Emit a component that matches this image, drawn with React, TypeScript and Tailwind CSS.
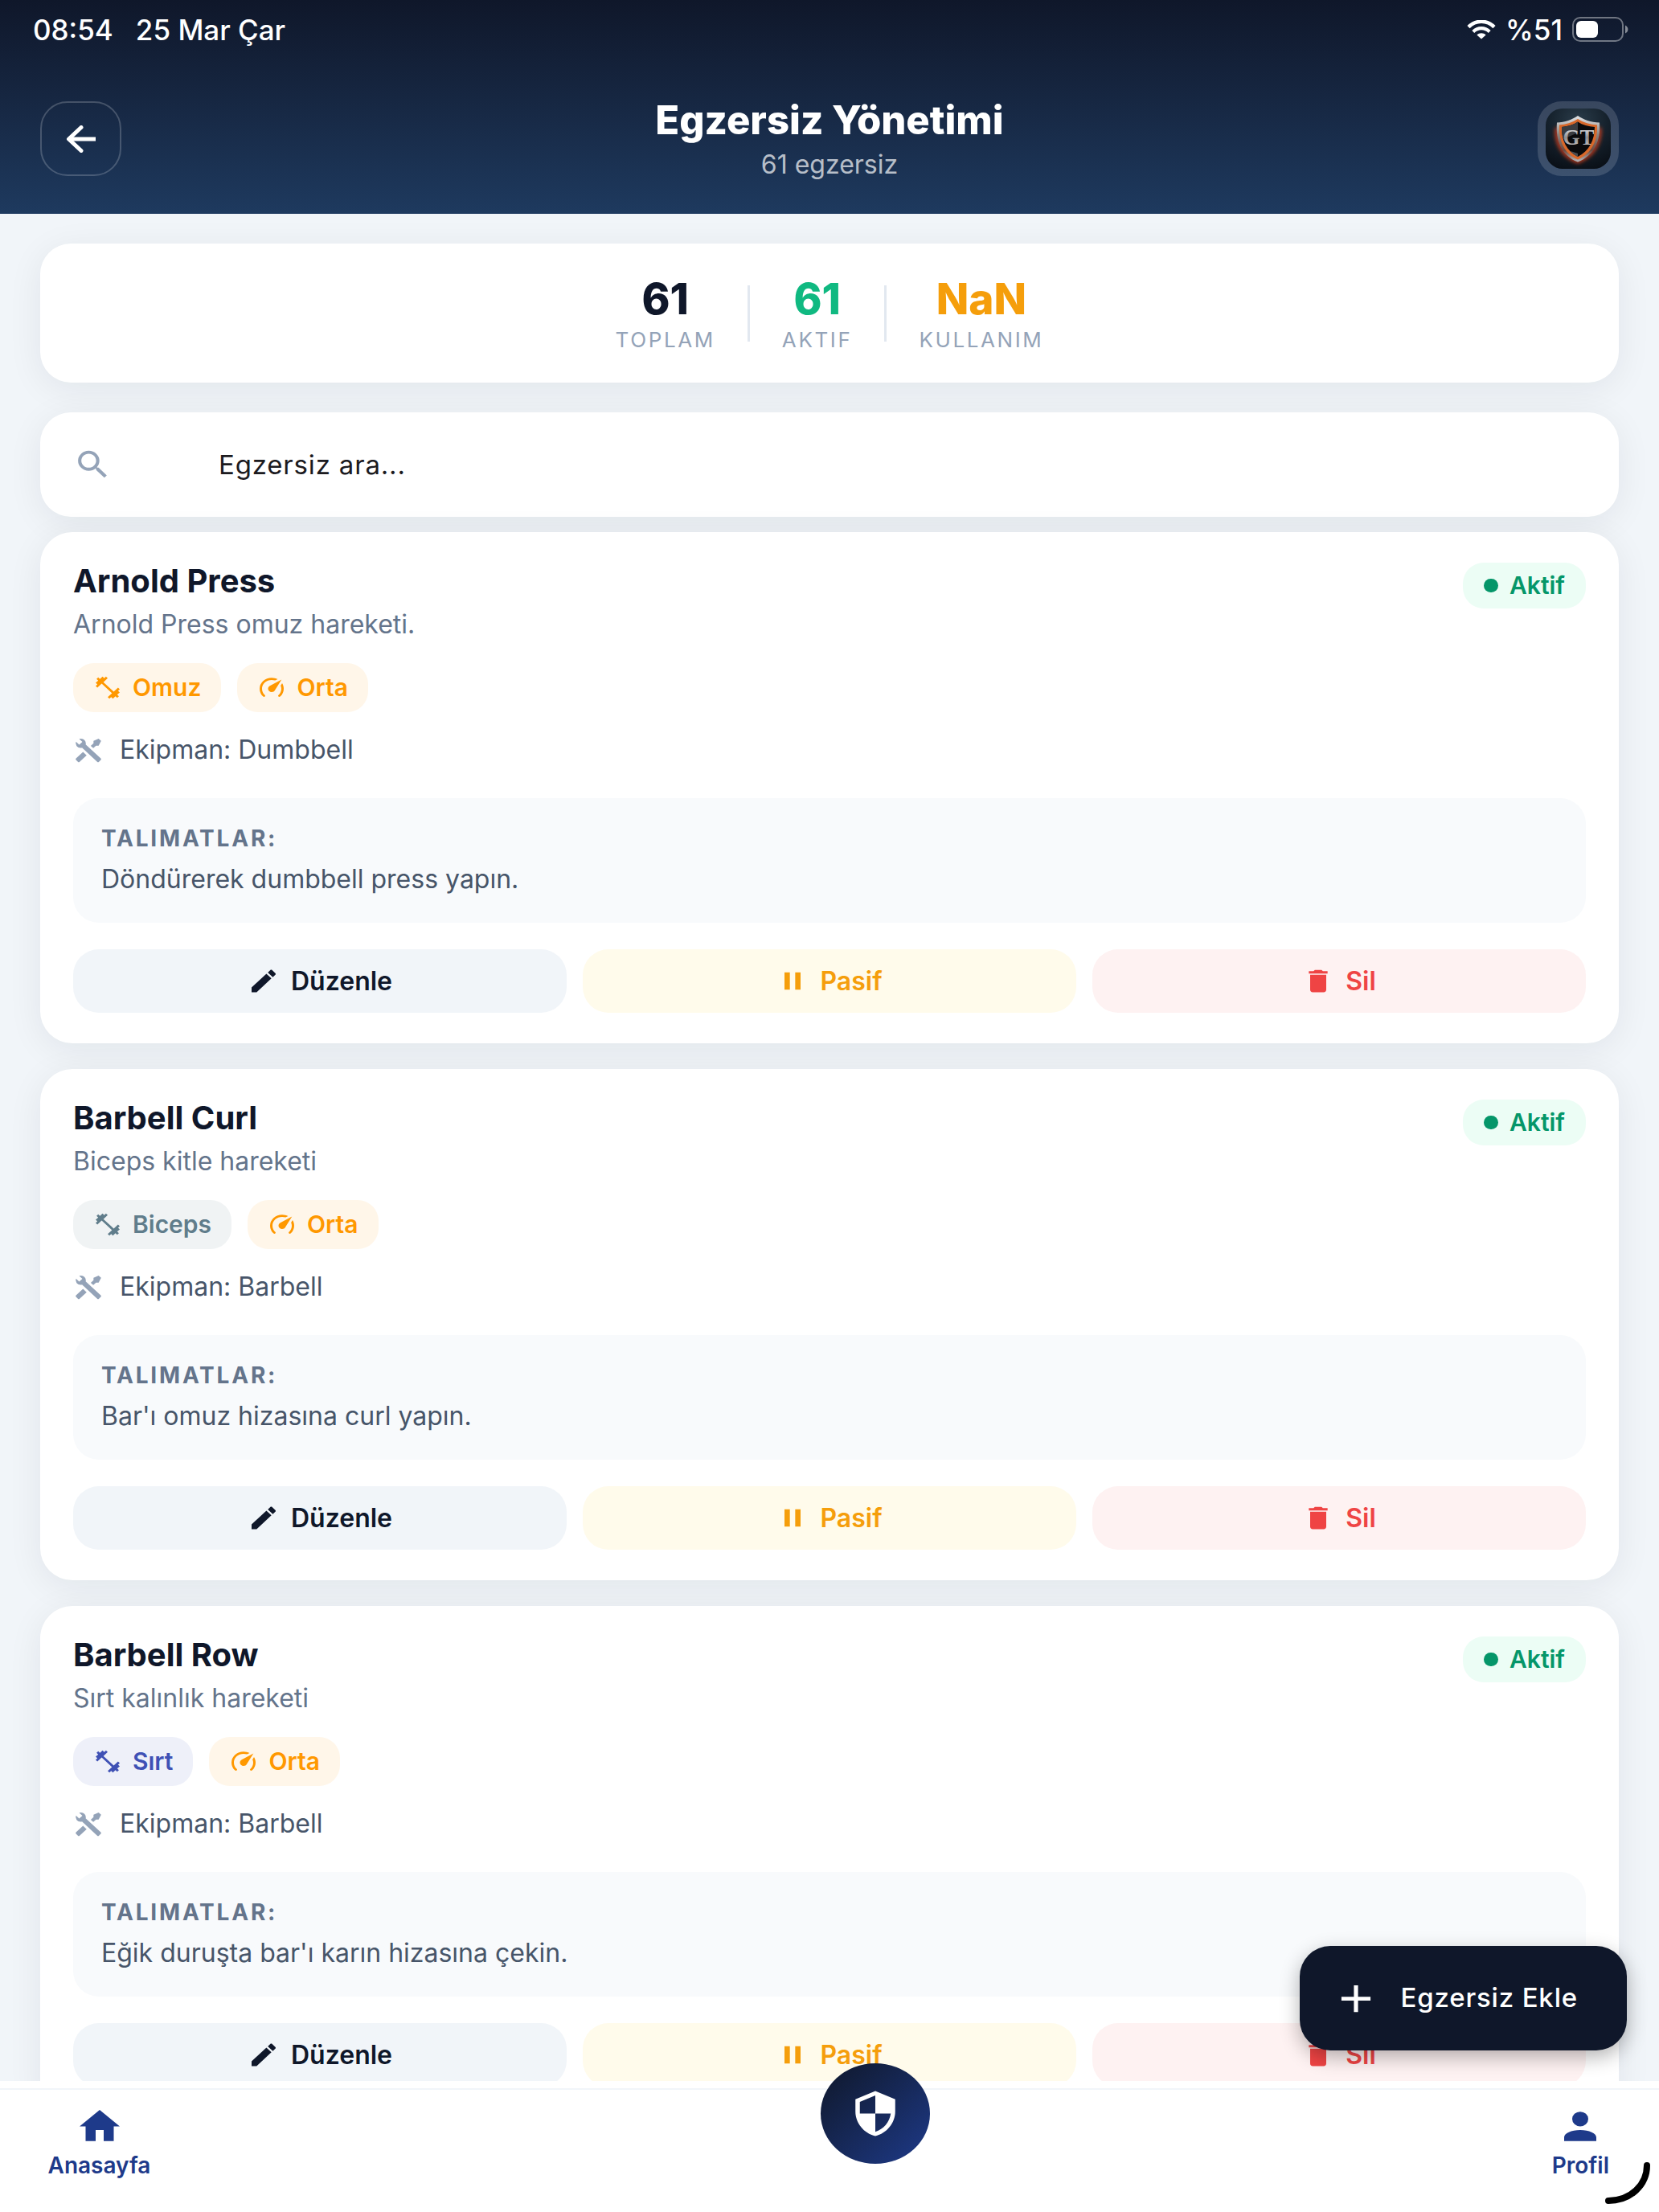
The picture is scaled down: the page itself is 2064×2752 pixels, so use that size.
import type { ReactNode } from "react";

const PATHS = {
  dumbbell:
    "M20.57,14.86L22,13.43L20.57,12L17,15.57L8.43,7L12,3.43L10.57,2L9.14,3.43L7.71,2L5.57,4.14L4.14,2.71L2.71,4.14L4.14,5.57L2,7.71L3.43,9.14L2,10.57L3.43,12L7,8.43L15.57,17L12,20.57L13.43,22L14.86,20.57L16.29,22L18.43,19.86L19.86,21.29L21.29,19.86L19.86,18.43L22,16.29L20.57,14.86Z",
  speedometer:
    "M12,16A3,3 0 0,1 9,13C9,11.88 9.61,10.9 10.5,10.39L20.21,4.77L14.68,14.35C14.18,15.33 13.17,16 12,16M12,3C13.81,3 15.5,3.5 16.97,4.32L14.87,5.53C14,5.19 13,5 12,5A8,8 0 0,0 4,13C4,15.21 4.89,17.21 6.34,18.65H6.35C6.74,19.04 6.74,19.67 6.35,20.06C5.96,20.45 5.32,20.45 4.93,20.07V20.07C3.12,18.26 2,15.76 2,13A10,10 0 0,1 12,3M22,13C22,15.76 20.88,18.26 19.07,20.07V20.07C18.68,20.45 18.05,20.45 17.66,20.06C17.27,19.67 17.27,19.04 17.66,18.65V18.65C19.11,17.2 20,15.21 20,13C20,12 19.81,11 19.46,10.1L20.67,8C21.5,9.5 22,11.18 22,13Z",
  tools:
    "M21.71 20.29L20.29 21.71A1 1 0 0 1 18.88 21.71L7 9.85A3.81 3.81 0 0 1 6 10A4 4 0 0 1 2.22 4.7L4.76 7.24L5.29 6.71L6.71 5.29L7.24 4.76L4.7 2.22A4 4 0 0 1 10 6A3.81 3.81 0 0 1 9.85 7L21.71 18.88A1 1 0 0 1 21.71 20.29M2.29 18.88A1 1 0 0 0 2.29 20.29L3.71 21.71A1 1 0 0 0 5.12 21.71L10.59 16.25L7.76 13.42M20 2L16 4V6L13.83 8.17L15.83 10.17L18 8H20L22 4Z",
  pencil:
    "M20.71,7.04C21.1,6.65 21.1,6 20.71,5.63L18.37,3.29C18,2.9 17.35,2.9 16.96,3.29L15.12,5.12L18.87,8.87M3,17.25V21H6.75L17.81,9.93L14.06,6.18L3,17.25Z",
  pause: "M14,19H18V5H14M6,19H10V5H6V19Z",
  trash:
    "M19,4H15.5L14.5,3H9.5L8.5,4H5V6H19M6,19A2,2 0 0,0 8,21H16A2,2 0 0,0 18,19V7H6V19Z",
  magnify:
    "M9.5,3A6.5,6.5 0 0,1 16,9.5C16,11.11 15.41,12.59 14.44,13.73L14.71,14H15.5L20.5,19L19,20.5L14,15.5V14.71L13.73,14.44C12.59,15.41 11.11,16 9.5,16A6.5,6.5 0 0,1 3,9.5A6.5,6.5 0 0,1 9.5,3M9.5,5C7,5 5,7 5,9.5C5,12 7,14 9.5,14C12,14 14,12 14,9.5C14,7 12,5 9.5,5Z",
  home: "M10,20V14H14V20H19V12H22L12,3L2,12H5V20H10Z",
  account:
    "M12,4A4,4 0 0,1 16,8A4,4 0 0,1 12,12A4,4 0 0,1 8,8A4,4 0 0,1 12,4M12,14C16.42,14 20,15.79 20,18V20H4V18C4,15.79 7.58,14 12,14Z",
  shield:
    "M12,12H19C18.47,16.11 15.72,19.78 12,20.92V12H5V6.3L12,3.19M12,1L3,5V11C3,16.55 6.84,21.73 12,23C17.16,21.73 21,16.55 21,11V5L12,1Z",
  plus: "M19,13H13V19H11V13H5V11H11V5H13V11H19V13Z",
};

function Icon({ name, className }: { name: keyof typeof PATHS; className: string }) {
  return (
    <svg
      viewBox="0 0 24 24"
      preserveAspectRatio="none"
      fill="currentColor"
      fillRule="evenodd"
      aria-hidden="true"
      className={`shrink-0 ${className}`}
    >
      <path d={PATHS[name]} />
    </svg>
  );
}

function StatusBar() {
  return (
    <div className="flex h-[74px] items-center justify-between pr-[38px] pl-[41px] text-[35px] leading-10 font-medium text-white">
      <div className="flex gap-7">
        <span>08:54</span>
        <span>25 Mar Çar</span>
      </div>
      <div className="flex items-center gap-3">
        <svg viewBox="0 0 36 24" className="h-6 w-9" fill="none" stroke="white" aria-hidden="true">
          <path d="M2 8.6C11 -0.6 25 -0.6 34 8.6" strokeWidth="4.4" />
          <path d="M7.8 14.4C13.6 8.8 22.4 8.8 28.2 14.4" strokeWidth="4.2" />
          <path d="M12.4 18.6C15.4 15.6 20.6 15.6 23.6 18.6L18 23.6Z" fill="white" stroke="none" />
        </svg>
        <span>%51</span>
        <svg viewBox="0 0 70 32" className="h-8 w-[70px]" fill="none" aria-hidden="true">
          <rect x="1" y="1" width="62" height="29" rx="9" stroke="white" strokeOpacity="0.4" strokeWidth="2" />
          <rect x="5" y="5" width="27" height="21" rx="6" fill="white" />
          <path d="M66 10.5C70.5 12.5 70.5 18.5 66 20.5Z" fill="white" fillOpacity="0.5" />
        </svg>
      </div>
    </div>
  );
}

function Logo() {
  return (
    <svg viewBox="0 0 81 75" className="h-[75px] w-[81px] rounded-[21px]" role="img" aria-label="GT">
      <defs>
        <radialGradient id="tile" cx="0.5" cy="0.2" r="0.9">
          <stop offset="0" stopColor="#2a3c4a" />
          <stop offset="0.5" stopColor="#15212c" />
          <stop offset="1" stopColor="#080d14" />
        </radialGradient>
        <linearGradient id="rim" x1="0" y1="0" x2="0" y2="1">
          <stop offset="0" stopColor="#e3e5e8" />
          <stop offset="0.4" stopColor="#8d8580" />
          <stop offset="0.75" stopColor="#6b4a40" />
          <stop offset="1" stopColor="#b9bcc0" />
        </linearGradient>
        <linearGradient id="steel" x1="0" y1="0" x2="0" y2="1">
          <stop offset="0" stopColor="#ffffff" />
          <stop offset="0.5" stopColor="#8e8e92" />
          <stop offset="1" stopColor="#d9d2cd" />
        </linearGradient>
        <filter id="glow" x="-30%" y="-30%" width="160%" height="160%">
          <feGaussianBlur stdDeviation="2.4" />
        </filter>
      </defs>
      <rect width="81" height="75" fill="url(#tile)" />
      <path
        d="M14 24C13 43 21 58 40 66C59 58 68 43 67 24"
        fill="none"
        stroke="#e2401a"
        strokeWidth="4"
        filter="url(#glow)"
      />
      <path
        d="M40 9C33 14 24 17 14 17.500C12 40 20 59 40 66.500C60 59 69 40 67 17.500C56 17 47 14 40 9Z"
        fill="url(#rim)"
      />
      <path
        d="M40 13C33 17.500 25 20 17 20.500C16 40 23 56 40 63.500C57 56 65 40 64 20.500C55 20 47 17.500 40 13Z"
        fill="#d9682a"
      />
      <path
        d="M40 16.500C34 20.500 27 22.500 20 23C19.500 39 26 53 40 60C54 53 61 39 61 23C53 22.500 46 20.500 40 16.500Z"
        fill="#0a0a0c"
      />
      <path d="M40 16.500C34 20.500 27 22.500 20 23C19.800 28 20.300 33 22 38L40 30Z" fill="#3a3c40" />
      <path d="M40 60C37 58.500 33 56 31 53L40 56Z" fill="#4a4d52" />
      <text
        x="41"
        y="45"
        textAnchor="middle"
        fontFamily="Liberation Serif, serif"
        fontWeight="700"
        fontSize="27"
        fill="url(#steel)"
      >
        GT
      </text>
    </svg>
  );
}

function Header() {
  return (
    <header className="shrink-0 bg-linear-to-b from-[#0f172a] to-[#1e3a5f]">
      <StatusBar />
      <div className="mt-11 flex items-center justify-between px-[50px] pb-[39px]">
        <button
          type="button"
          aria-label="Geri"
          className="flex h-[93px] w-[101px] items-center justify-center rounded-[34px] border-2 border-white/20 text-white"
        >
          <svg
            viewBox="0 0 38 34"
            className="h-[34px] w-[38px]"
            fill="none"
            stroke="currentColor"
            strokeWidth="5"
            strokeLinejoin="round"
            aria-hidden="true"
          >
            <path d="M37 17H4" />
            <path d="M19 2.500L3.500 17L19 31.500" strokeLinecap="round" />
          </svg>
        </button>
        <div className="text-center">
          <h1 className="text-[49px] leading-16 font-extrabold text-white">Egzersiz Yönetimi</h1>
          <p className="text-[32px] leading-[45px] text-white/70">61 egzersiz</p>
        </div>
        <div className="flex h-[93px] w-[101px] items-center justify-center rounded-[30px] bg-white/15">
          <Logo />
        </div>
      </div>
    </header>
  );
}

function Stat({ value, label, tone }: { value: string; label: string; tone: string }) {
  return (
    <div className="pt-[7px] text-center">
      <div className={`text-[53px] leading-[60px] font-extrabold ${tone}`}>{value}</div>
      <div className="text-[26px] leading-[42px] tracking-widest text-[#94a3b8]">{label}</div>
    </div>
  );
}

function Stats() {
  return (
    <section className="flex items-center justify-center gap-10 rounded-[38px] bg-white py-8 shadow-[0_8px_44px_rgba(15,23,42,0.07)]">
      <Stat value="61" label="TOPLAM" tone="text-[#0f172a]" />
      <div className="h-[70px] w-[3px] bg-[#e2e8f0]" />
      <Stat value="61" label="AKTIF" tone="text-[#10b981]" />
      <div className="h-[70px] w-[3px] bg-[#e2e8f0]" />
      <Stat value="NaN" label="KULLANIM" tone="text-[#f59e0b]" />
    </section>
  );
}

function Search() {
  return (
    <label className="mt-[37px] flex h-[130px] items-center rounded-[38px] bg-white pr-10 pl-[41px] shadow-[0_8px_44px_rgba(15,23,42,0.07)]">
      <Icon name="magnify" className="h-[46px] w-[49px] text-[#94a3b8]" />
      <input
        type="text"
        aria-label="Egzersiz ara"
        placeholder="Egzersiz ara..."
        className="ml-[132px] h-14 min-w-0 flex-1 bg-transparent text-[33px] tracking-wide text-[#1c1b1f] outline-none placeholder:text-[#1c1b1f] placeholder:opacity-100"
      />
    </label>
  );
}

function Chip({ icon, tone, children }: { icon: keyof typeof PATHS; tone: string; children: ReactNode }) {
  return (
    <span className={`flex h-[61px] items-center gap-[13px] rounded-[26px] px-[25px] text-[30px] font-semibold ${tone}`}>
      <Icon name={icon} className="h-[33px] w-9" />
      {children}
    </span>
  );
}

function Action({ icon, tone, children }: { icon: keyof typeof PATHS; tone: string; children: ReactNode }) {
  return (
    <button
      type="button"
      className={`flex h-[79px] items-center justify-center gap-[14px] rounded-[32px] text-[32px] font-semibold ${tone}`}
    >
      <Icon name={icon} className="h-[37px] w-10" />
      {children}
    </button>
  );
}

type Exercise = {
  name: string;
  description: string;
  muscle: string;
  muscleTone: string;
  equipment: string;
  instructions: string;
};

const EXERCISES: Exercise[] = [
  {
    name: "Arnold Press",
    description: "Arnold Press omuz hareketi.",
    muscle: "Omuz",
    muscleTone: "bg-[#fff6e9] text-[#ff9800]",
    equipment: "Dumbbell",
    instructions: "Döndürerek dumbbell press yapın.",
  },
  {
    name: "Barbell Curl",
    description: "Biceps kitle hareketi",
    muscle: "Biceps",
    muscleTone: "bg-[#f0f3f4] text-[#607d8b]",
    equipment: "Barbell",
    instructions: "Bar'ı omuz hizasına curl yapın.",
  },
  {
    name: "Barbell Row",
    description: "Sırt kalınlık hareketi",
    muscle: "Sırt",
    muscleTone: "bg-[#eef0f9] text-[#3f51b5]",
    equipment: "Barbell",
    instructions: "Eğik duruşta bar'ı karın hizasına çekin.",
  },
];

function ExerciseCard({ exercise }: { exercise: Exercise }) {
  return (
    <article className="rounded-[40px] bg-white px-[41px] py-[38px] shadow-[0_8px_44px_rgba(15,23,42,0.07)]">
      <div className="flex items-start justify-between">
        <div>
          <h2 className="text-[40px] leading-[46px] font-bold text-[#0f172a]">{exercise.name}</h2>
          <p className="mt-[10px] text-[32px] leading-[42px] text-[#64748b]">{exercise.description}</p>
        </div>
        <span className="flex h-[57px] items-center gap-[14px] rounded-[26px] bg-[#ecfdf5] px-[26px] text-[30px] font-semibold text-[#059669]">
          <span className="h-[17px] w-[18px] rounded-full bg-[#059669]" />
          Aktif
        </span>
      </div>

      <div className="mt-[27px] flex gap-5">
        <Chip icon="dumbbell" tone={exercise.muscleTone}>
          {exercise.muscle}
        </Chip>
        <Chip icon="speedometer" tone="bg-[#fff6e9] text-[#ff9800]">
          Orta
        </Chip>
      </div>

      <div className="mt-[25px] flex h-11 items-center gap-5 text-[32px] text-[#475569]">
        <Icon name="tools" className="h-[35px] w-[38px] text-[#94a3b8]" />
        <span>Ekipman: {exercise.equipment}</span>
      </div>

      <div className="mt-[38px] rounded-[32px] bg-[#f8fafc] px-[35px] pt-8 pb-[33px]">
        <h3 className="text-[28px] leading-9 font-bold tracking-widest text-[#64748b]">TALIMATLAR:</h3>
        <p className="mt-3 text-[32px] leading-[42px] text-[#475569]">{exercise.instructions}</p>
      </div>

      <div className="mt-[33px] grid grid-cols-3 gap-5">
        <Action icon="pencil" tone="bg-[#f1f5f9] text-[#0f172a]">
          Düzenle
        </Action>
        <Action icon="pause" tone="bg-[#fffbeb] text-[#f59e0b]">
          Pasif
        </Action>
        <Action icon="trash" tone="bg-[#fef2f2] text-[#ef4444]">
          Sil
        </Action>
      </div>
    </article>
  );
}

function BottomNav() {
  return (
    <nav className="relative h-[163px] shrink-0 bg-white pt-[9px]">
      <div className="flex items-start justify-between border-t-2 border-[#f1f5f9] pr-[62px] text-[28px] leading-8 font-semibold text-[#1e3a8a]">
        <a href="#anasayfa" className="flex w-[247px] flex-col items-center gap-[5px] pt-[18px]">
          <Icon name="home" className="h-[55px] w-[60px]" />
          Anasayfa
        </a>
        <button
          type="button"
          aria-label="Yönetim"
          className="-mt-[33px] flex h-[125px] w-[136px] items-center justify-center rounded-[50%] bg-linear-to-br from-[#0f172a] to-[#1e3a8a] text-white"
        >
          <Icon name="shield" className="h-[61px] w-[66px]" />
        </button>
        <a href="#profil" className="flex flex-col items-center gap-[5px] pt-[18px]">
          <Icon name="account" className="h-[55px] w-[60px]" />
          Profil
        </a>
      </div>
      <svg
        viewBox="0 0 58 54"
        className="absolute right-[10px] bottom-[9px] h-[54px] w-[58px]"
        fill="none"
        stroke="black"
        strokeWidth="8"
        strokeLinecap="round"
        aria-hidden="true"
      >
        <path d="M5 49C33 49 53 29 53 5" />
      </svg>
    </nav>
  );
}

export default function App() {
  return (
    <div className="relative flex h-screen flex-col bg-[#f1f5f9] font-[Inter,sans-serif]">
      <Header />
      <main className="min-h-0 flex-1 overflow-y-auto px-[50px] pt-[37px] pb-10 [scrollbar-width:none]">
        <Stats />
        <Search />
        <div className="mt-[19px] flex flex-col gap-8">
          {EXERCISES.map((exercise) => (
            <ExerciseCard key={exercise.name} exercise={exercise} />
          ))}
        </div>
      </main>
      <BottomNav />
      <button
        type="button"
        className="absolute right-10 bottom-[201px] flex h-[130px] items-center gap-6 rounded-[38px] bg-[#0f172a] pr-[61px] pl-[39px] text-[33px] font-medium tracking-wide text-white shadow-[0_8px_24px_rgba(0,0,0,0.3)]"
      >
        <Icon name="plus" className="h-[57px] w-[62px]" />
        Egzersiz Ekle
      </button>
    </div>
  );
}
